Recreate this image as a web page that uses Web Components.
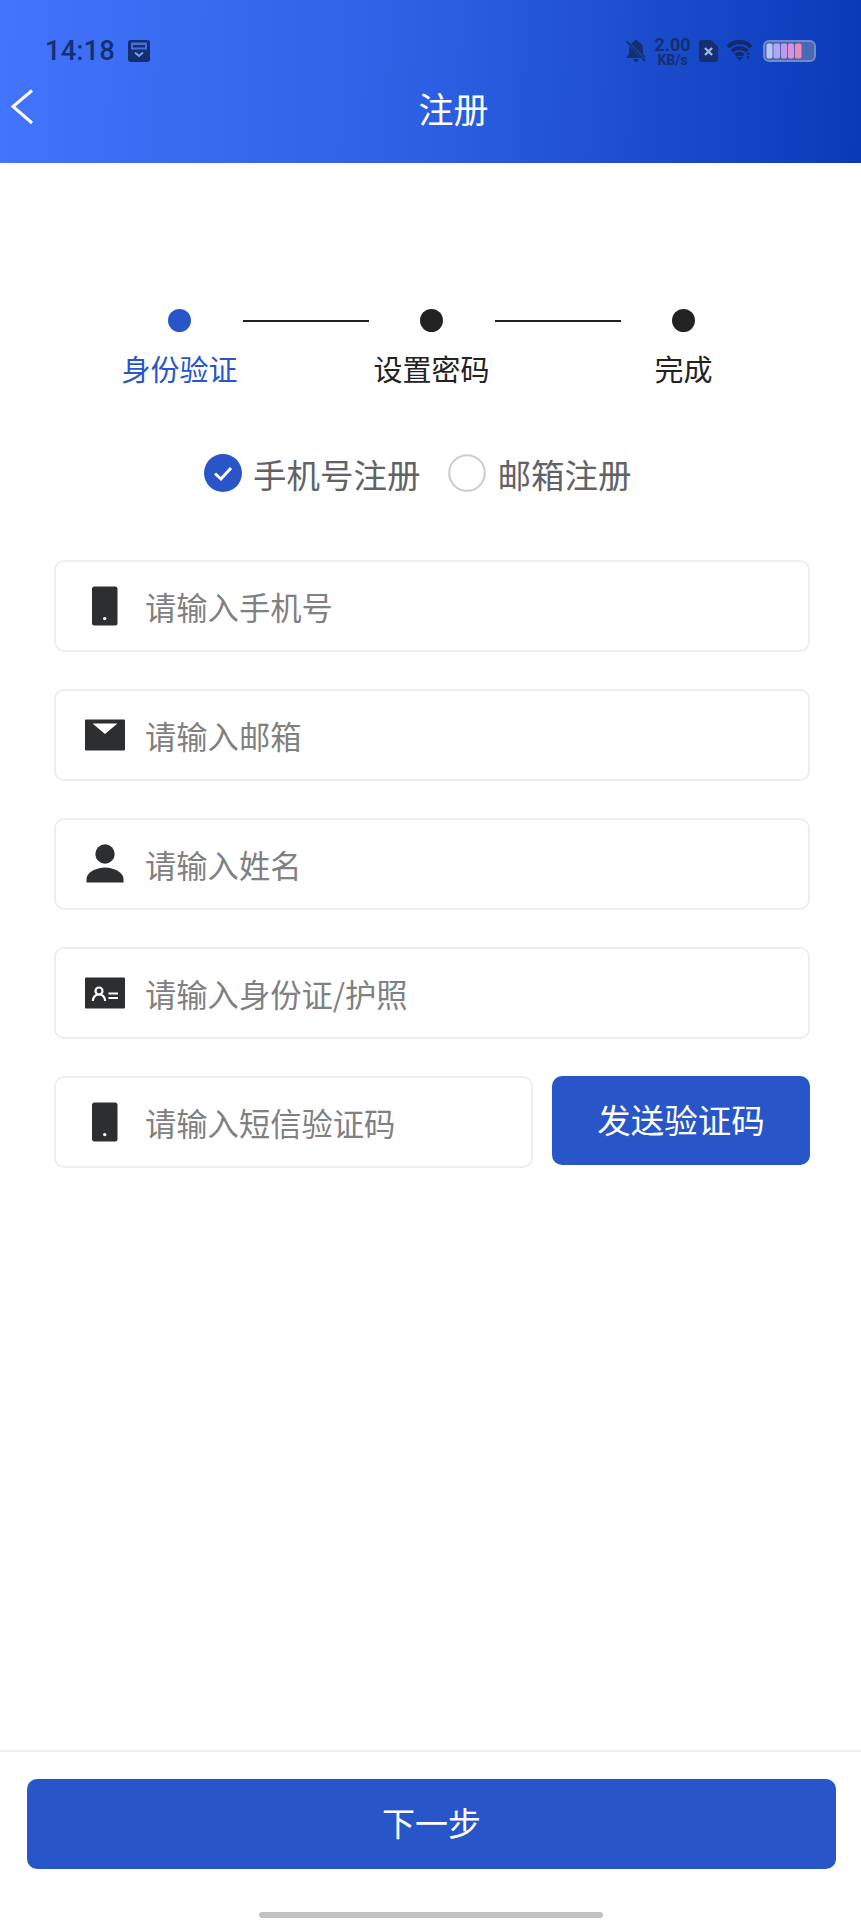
<!DOCTYPE html>
<html lang="zh-CN"><head><meta charset="utf-8"><title>注册</title>
<style>
html,body{margin:0;padding:0;background:#fff}
body{width:861px;height:1920px;display:flex;flex-direction:column;font-family:"Noto Sans CJK SC","Noto Sans",sans-serif;overflow:hidden}
</style></head><body>
<app-header title="注册"></app-header>
<reg-steps></reg-steps>
<reg-mode></reg-mode>
<reg-form>
  <reg-field icon="phone" placeholder="请输入手机号"></reg-field>
  <reg-field icon="mail" placeholder="请输入邮箱"></reg-field>
  <reg-field icon="person" placeholder="请输入姓名"></reg-field>
  <reg-field icon="id" placeholder="请输入身份证/护照"></reg-field>
  <reg-code-row></reg-code-row>
</reg-form>
<reg-footer></reg-footer>
<script>
function def(name, html){
  customElements.define(name, class extends HTMLElement{
    constructor(){super();this.attachShadow({mode:'open'}).innerHTML=typeof html==='function'?html(this):html;}
    connectedCallback(){ if(typeof html==='function') this.shadowRoot.innerHTML=html(this); }
  });
}
const ICONS={
 phone:'<svg width="40" height="40" viewBox="0 0 40 40"><rect x="7" y="0.500" width="25.500" height="39" rx="2.500" fill="#2d2e30"/><circle cx="19.700" cy="32.600" r="1.700" fill="#fff"/></svg>',
 mail:'<svg width="40" height="40" viewBox="0 0 40 40"><path d="M0 5.500a1 1 0 0 1 1-1h38a1 1 0 0 1 1 1v29a1 1 0 0 1-1 1H1a1 1 0 0 1-1-1z" fill="#2d2e30"/><path d="M7.500 8.500h25L20 19z" fill="#fff"/></svg>',
 person:'<svg width="40" height="40" viewBox="0 0 40 40"><circle cx="20" cy="10" r="9.700" fill="#2d2e30"/><path d="M1.500 38.500v-3.600C1.500 28.600 11 23.600 20 23.600s18.500 5 18.500 11.300v3.600z" fill="#2d2e30"/></svg>',
 id:'<svg width="40" height="40" viewBox="0 0 40 40"><rect x="0" y="4.500" width="40" height="31" rx="1" fill="#2d2e30"/><circle cx="14" cy="18" r="3.500" fill="none" stroke="#fff" stroke-width="2.200"/><path d="M7.800 28c.5-4.700 3-6.500 6.200-6.500s5.700 1.800 6.200 6.500" fill="none" stroke="#fff" stroke-width="2.200"/><path d="M23.500 20.500h9.500M23.500 25h9.500" stroke="#fff" stroke-width="2.200"/></svg>'
};
def('app-header',el=>`<style>
:host{display:block;height:163px;flex:none;background:linear-gradient(92deg,#4274fc 0%,#2c5fe2 50%,#0a3ab8 100%);color:#fff;box-sizing:border-box;position:relative}
.status{height:72px;padding:29px 45px 0 45px;box-sizing:border-box;display:flex;align-items:center;color:#152f70}
.time{font:500 27.500px/1 Roboto,sans-serif}
.left{display:flex;align-items:center;gap:13px}
.right{margin-left:auto;display:flex;align-items:center;gap:9px}
.speed{display:flex;flex-direction:column;align-items:center;width:35px;font:700 18px/16px Roboto,sans-serif;margin-top:2px}
.speed small{font:700 14px/14px Roboto,sans-serif}
.nav{height:91px;display:flex;align-items:center;justify-content:center;position:relative}
.back{position:absolute;left:10px;top:17px}
.title{font-size:35px;line-height:1;margin:0 0 20px 46px;font-weight:400}
svg{display:block;flex:none}
</style>
<div class="status"><div class="left"><span class="time">14:18</span>
<svg width="22" height="22" viewBox="0 0 22 22"><rect width="22" height="22" rx="3" fill="#152f70"/><path d="M3 2.500h16v7H3z" fill="#4470e0"/><path d="M5 5h12v2.500H5z" fill="#152f70"/><path d="M7 12.500l4 3.500 4-3.500" fill="none" stroke="#7e9cec" stroke-width="2"/></svg></div>
<div class="right">
<svg width="20" height="22" viewBox="0 0 20 22"><path d="M10 0c-1.200 0-2 .8-2 1.800C5 2.700 3 5.200 3 8.500V14L.8 16.500V18h18.400v-1.500L17 14V8.500C17 5.200 15 2.700 12 1.800 12 .8 11.200 0 10 0zM7.500 19c0 1.700 1.100 3 2.500 3s2.500-1.300 2.500-3z" fill="#152f70"/><path d="M1.500 2l18 19" stroke="#1a4ac4" stroke-width="3.200"/><path d="M.5 1l18.500 20" stroke="#152f70" stroke-width="1.800"/></svg>
<span class="speed">2.00<small>KB/s</small></span>
<svg width="19" height="22" viewBox="0 0 19 22"><path d="M3 0h9l7 6.500V19a3 3 0 0 1-3 3H3a3 3 0 0 1-3-3V3a3 3 0 0 1 3-3z" fill="#152f70"/><path d="M6 8l7 7M13 8l-7 7" stroke="#9fb6f0" stroke-width="2.400"/></svg>
<svg width="26" height="21" viewBox="0 0 26 21"><path d="M1 6.800C7.500.4 17.500.4 24 6.800" fill="none" stroke="#132a66" stroke-width="3.800"/><path d="M5 11.200c4.300-4 11-4 15.300 0" fill="none" stroke="#132a66" stroke-width="3.800"/><path d="M8.500 15.400c2.500-2.200 5.500-2.200 8 0" fill="none" stroke="#132a66" stroke-width="3.400"/><path d="M9.500 17h6.500L12.700 21z" fill="#132a66"/><path d="M19.500 14.500h3.500L21.200 12zM19.500 16.500h3.500L21.200 19z" fill="#132a66"/></svg>
<svg style="margin-left:1px" width="53" height="22" viewBox="0 0 53 22"><rect x="1" y="1" width="51" height="20" rx="5" fill="#4a68b6" stroke="#7488c8" stroke-width="2"/><rect x="3.500" y="3.500" width="6" height="15" rx="2" fill="#b9c4f4"/><rect x="10.500" y="3.500" width="6.500" height="15" rx="2" fill="#b3a8f0"/><rect x="18" y="3.500" width="6" height="15" rx="2" fill="#c19be8"/><rect x="25" y="3.500" width="6" height="15" rx="2" fill="#d994d8"/><rect x="32" y="3.500" width="6.500" height="15" rx="2" fill="#ec8cb0"/></svg>
</div></div>
<div class="nav"><svg class="back" width="24" height="36" viewBox="0 0 24 36"><path d="M22 1.500L3 17.500 22 34" fill="none" stroke="#fff" stroke-width="3"/></svg><span class="title">${el.getAttribute('title')}</span></div>`);
def('reg-steps',`<style>
:host{display:block;flex:none;margin-top:145px}
.track{display:flex;align-items:center;gap:51.600px;padding-left:168px;height:24px}
.dot{width:23px;height:23px;border-radius:50%;background:#222;flex:none}
.dot.on{background:#2855c8}
.line{width:126px;height:2px;background:#222;flex:none;margin-top:1px}
.labels{display:grid;grid-template-columns:repeat(3,252px);padding-left:53.500px;margin-top:16px;font-size:29px;line-height:40px;color:#222;text-align:center}
.labels .on{color:#2855c8}
</style>
<div class="track"><span class="dot on"></span><span class="line"></span><span class="dot"></span><span class="line"></span><span class="dot"></span></div>
<div class="labels"><span class="on">身份验证</span><span>设置密码</span><span>完成</span></div>`);
def('reg-mode',`<style>
:host{display:flex;flex:none;align-items:center;margin:61px 0 0 204px;height:48px;font-size:33.500px;color:#606266}
.c{width:38px;height:38px;flex:none;margin-right:11px;display:block}
.c.off{margin-right:12px}
.t{margin-right:27px}
</style>
<svg class="c" viewBox="0 0 38 38"><circle cx="19" cy="19" r="19" fill="#2855c8"/><path d="M11 19.500l6 5.500 10-11" fill="none" stroke="#fff" stroke-width="3"/></svg><span class="t">手机号注册</span>
<svg class="c off" viewBox="0 0 38 38"><circle cx="19" cy="19" r="17.800" fill="#fff" stroke="#ccc" stroke-width="2"/></svg><span>邮箱注册</span>`);
def('reg-form',`<style>:host{display:flex;flex:none;flex-direction:column;gap:37px;margin:63px 51px 0 54px}</style><slot></slot>`);
def('reg-field',el=>`<style>
:host{display:flex;flex:1 0 92px;align-items:center;height:92px;box-sizing:border-box;border:2px solid #eee;border-radius:10px;background:#fff;padding-left:29px;gap:20px;min-width:0}
.p{font-size:31.300px;color:#808080;white-space:nowrap;line-height:1;margin-top:1px}
svg{display:block;flex:none}
</style>${ICONS[el.getAttribute('icon')]||''}<span class="p">${el.getAttribute('placeholder')}</span>`);
def('reg-code-row',`<style>
:host{display:flex;align-items:flex-start;gap:19px}
button{width:258px;height:89px;border:0;border-radius:10px;background:#2855c8;color:#fff;font:400 33.500px/1 "Noto Sans CJK SC",sans-serif;padding:0 0 3px;flex:none}
</style><reg-field icon="phone" placeholder="请输入短信验证码"></reg-field><button>发送验证码</button>`);
def('reg-footer',`<style>
:host{display:block;margin-top:auto;flex:none;border-top:2px solid #eee;height:170px;box-sizing:border-box;padding:27px 25px 0 27px}
button{display:block;width:100%;height:90px;border:0;border-radius:10px;background:#2855c8;color:#fff;font:400 33px/1 "Noto Sans CJK SC",sans-serif;padding:0 0 4px}
.bar{width:344px;height:6px;border-radius:3px;background:#c2c2c2;margin:43px 0 0 232px}
</style><button>下一步</button><div class="bar"></div>`);
</script>
</body></html>
